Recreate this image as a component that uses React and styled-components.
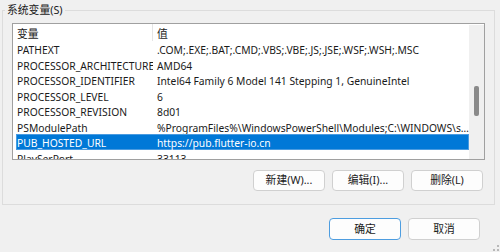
import React from 'react';
import styled, { createGlobalStyle } from 'styled-components';

const GlobalStyle = createGlobalStyle`
  html, body {
    margin: 0;
    padding: 0;
    background: #f0f0f0;
  }
  body {
    font-family: "Noto Sans", "Noto Sans CJK SC", sans-serif;
    font-size: 10.3px;
    color: #1a1a1a;
  }
`;

const StyledWindow = styled.div`
  position: relative;
  width: 500px;
  height: 252px;
  overflow: hidden;
  background: #f0f0f0;
`;

const StyledGroup = styled.fieldset`
  box-sizing: border-box;
  width: 493px;
  margin: 2px 0 0 2px;
  padding: 5px 9px 13px 9px;
  border: 1px solid #dcdcdc;
  min-width: 0;
`;

const StyledLegend = styled.legend`
  margin-left: -7px;
  padding: 0 2px;
  height: 16px;
  line-height: 16px;
  font-size: 10.8px;
  color: #1a1a1a;
`;

const StyledList = styled.div`
  position: relative;
  box-sizing: border-box;
  height: 137px;
  border: 1px solid #a0a0a0;
  background: #fff;
  overflow: hidden;
`;

const StyledHeader = styled.div`
  display: flex;
  height: 17px;
  align-items: center;
  padding-left: 3px;
  margin-right: 16px;
`;

const StyledHeadCell = styled.div`
  box-sizing: border-box;
  width: ${(p) => (p.$first ? '137px' : 'auto')};
  flex: ${(p) => (p.$first ? 'none' : '1')};
  height: 17px;
  line-height: 19px;
  padding-left: ${(p) => (p.$first ? '1px' : '4px')};
  border-right: ${(p) => (p.$first ? '1px solid #e5e5e5' : 'none')};
  font-size: 10.8px;
`;

const StyledRows = styled.div`
  padding-left: 3px;
  margin-right: 15px;
`;

const StyledRow = styled.div`
  display: flex;
  height: 15.5px;
  overflow: hidden;
  line-height: 18px;
  background: ${(p) => (p.$selected ? '#0078d7' : 'transparent')};
  color: ${(p) => (p.$selected ? '#fff' : '#1a1a1a')};
  box-shadow: ${(p) => (p.$selected ? 'inset 0 0 0 1px #4a9be0' : 'none')};
`;

const StyledNameCell = styled.div`
  box-sizing: border-box;
  width: 137px;
  flex: none;
  padding-left: 1px;
  white-space: nowrap;
  overflow: hidden;
`;

const StyledValueCell = styled.div`
  flex: 1;
  min-width: 0;
  padding-left: 4px;
  white-space: nowrap;
  overflow: hidden;
  text-overflow: ellipsis;
`;

const StyledScrollbar = styled.div`
  position: absolute;
  top: 1px;
  right: 0;
  bottom: 0;
  width: 15px;
  background: #f0f0f0;
`;

const StyledThumb = styled.div`
  position: absolute;
  left: 5px;
  top: 61px;
  width: 5px;
  height: 30px;
  border-radius: 2px;
  background: #8a8a8a;
`;

const StyledButtonRow = styled.div`
  display: flex;
  justify-content: flex-end;
  gap: 7px;
  margin-top: 10px;
  padding-right: 2px;
`;

const StyledButton = styled.button`
  box-sizing: border-box;
  width: 72px;
  height: ${(p) => (p.$tall ? '22px' : '21px')};
  padding: 0;
  border: 1px solid ${(p) => (p.$default ? '#4d9de0' : '#d0d0d0')};
  border-radius: 4px;
  background: #fdfdfd;
  font-family: inherit;
  font-size: 10.8px;
  color: #1a1a1a;
  line-height: 1;
`;

const StyledFooter = styled.div`
  display: flex;
  justify-content: flex-end;
  gap: 7px;
  margin-top: 13px;
  padding-right: 20px;
`;

const StyledGrip = styled.svg`
  position: absolute;
  right: 1px;
  bottom: 1px;
`;

const rows = [
  ['PATHEXT', '.COM;.EXE;.BAT;.CMD;.VBS;.VBE;.JS;.JSE;.WSF;.WSH;.MSC'],
  ['PROCESSOR_ARCHITECTURE', 'AMD64'],
  ['PROCESSOR_IDENTIFIER', 'Intel64 Family 6 Model 141 Stepping 1, GenuineIntel'],
  ['PROCESSOR_LEVEL', '6'],
  ['PROCESSOR_REVISION', '8d01'],
  ['PSModulePath', '%ProgramFiles%\\WindowsPowerShell\\Modules;C:\\WINDOWS\\system32\\WindowsPowerShell\\v1.0\\Modules'],
  ['PUB_HOSTED_URL', 'https://pub.flutter-io.cn'],
  ['PlaySerPort', '33113'],
];

const SELECTED = 'PUB_HOSTED_URL';

const App = () => (
  <StyledWindow>
    <GlobalStyle />
    <StyledGroup>
      <StyledLegend>系统变量(S)</StyledLegend>
      <StyledList>
        <StyledHeader>
          <StyledHeadCell $first>变量</StyledHeadCell>
          <StyledHeadCell>值</StyledHeadCell>
        </StyledHeader>
        <StyledRows>
          {rows.map(([name, value]) => (
            <StyledRow key={name} $selected={name === SELECTED}>
              <StyledNameCell>{name}</StyledNameCell>
              <StyledValueCell>{value}</StyledValueCell>
            </StyledRow>
          ))}
        </StyledRows>
        <StyledScrollbar>
          <StyledThumb />
        </StyledScrollbar>
      </StyledList>
      <StyledButtonRow>
        <StyledButton>新建(W)...</StyledButton>
        <StyledButton>编辑(I)...</StyledButton>
        <StyledButton>删除(L)</StyledButton>
      </StyledButtonRow>
    </StyledGroup>
    <StyledFooter>
      <StyledButton $default $tall>确定</StyledButton>
      <StyledButton $tall>取消</StyledButton>
    </StyledFooter>
    <StyledGrip width="6" height="6" viewBox="0 0 6 6">
      <rect x="4" y="0" width="2" height="2" fill="#b8b8b8" />
      <rect x="0" y="4" width="2" height="2" fill="#b8b8b8" />
      <rect x="4" y="4" width="2" height="2" fill="#b8b8b8" />
    </StyledGrip>
  </StyledWindow>
);

export default App;
